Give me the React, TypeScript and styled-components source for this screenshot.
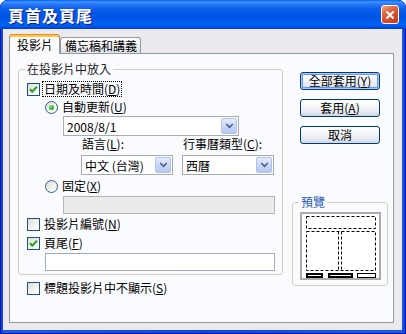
import styled, { createGlobalStyle } from "styled-components";

const FONT = `"Noto Sans CJK TC", "Noto Sans CJK SC", "Liberation Sans", sans-serif`;

const GlobalStyle = createGlobalStyle`
  html, body {
    margin: 0;
    padding: 0;
    background: #ffffff;
  }
  * {
    box-sizing: border-box;
  }
`;

const Window = styled.div`
  width: 406px;
  height: 334px;
  display: flex;
  flex-direction: column;
  background: linear-gradient(90deg, #0831D9 0%, #1C5BE8 1%, #0A47DC 50%, #1C5BE8 99%, #0831D9 100%);
  border-radius: 8px 8px 0 0;
  box-shadow: inset 0 0 0 1px #0019A8;
  overflow: hidden;
  font-family: ${FONT};
  font-size: 12px;
  color: #000;
`;

const TitleBar = styled.div`
  height: 29px;
  flex: none;
  display: flex;
  align-items: center;
  justify-content: space-between;
  padding: 0 7px 0 8px;
  background: linear-gradient(
    180deg,
    #0A5FF5 0%,
    #3D95FF 7%,
    #2A78F6 14%,
    #0A5CEB 32%,
    #0054E3 60%,
    #0062F5 86%,
    #0052E6 93%,
    #0040C8 100%
  );
  border-radius: 8px 8px 0 0;
`;

const Title = styled.span`
  color: #ffffff;
  font-weight: bold;
  font-size: 16px;
  letter-spacing: 1px;
  text-shadow: 1px 1px 0 #0F1E8A;
`;

const CloseButton = styled.div`
  width: 18px;
  height: 19px;
  border: 1px solid #ffffff;
  border-radius: 3px;
  background: linear-gradient(150deg, #F2A68A 0%, #E46A45 30%, #D8492A 65%, #C53A18 100%);
  display: flex;
  align-items: center;
  justify-content: center;
`;

const Body = styled.div`
  flex: 1;
  margin: 0 4px 4px 3px;
  background: #ECEAEE;
  padding: 5px 8px 7px 6px;
  display: flex;
  flex-direction: column;
`;

const TabRow = styled.div`
  height: 20px;
  flex: none;
  display: flex;
  align-items: flex-end;
  margin-bottom: -1px;
  position: relative;
  z-index: 1;
`;

const Tab = styled.div<{ $active?: boolean; $w: number }>`
  width: ${(p) => p.$w}px;
  height: ${(p) => (p.$active ? 20 : 16)}px;
  margin-bottom: ${(p) => (p.$active ? 0 : 1)}px;
  display: flex;
  align-items: center;
  padding-left: ${(p) => (p.$active ? 7 : 4)}px;
  border: 1px solid #919B9C;
  border-bottom: none;
  border-radius: 3px 3px 0 0;
  line-height: 14px;
  white-space: nowrap;
  background: ${(p) =>
    p.$active ? "#FCFCFE" : "linear-gradient(180deg, #FFFFFF 0%, #F3F3F6 50%, #DEE2EB 100%)"};
  ${(p) =>
    p.$active
      ? `border-top: 1px solid #E68B2C; box-shadow: inset 0 2px 0 #FFC73C;`
      : ""}
`;

const Panel = styled.div`
  flex: 1;
  border: 1px solid #919B9C;
  background: #FAFBFE;
  display: flex;
  padding: 8px 5px 0 8px;
`;

const LeftColumn = styled.div`
  width: 265px;
  display: flex;
  flex-direction: column;
`;

const RightColumn = styled.div`
  width: 96px;
  margin-left: 9px;
  display: flex;
  flex-direction: column;
  align-items: center;
  padding-top: 10px;
`;

const GroupBox = styled.fieldset<{ $w?: number; $mt?: number }>`
  margin: ${(p) => p.$mt ?? 0}px 0 0 0;
  padding: 0;
  width: ${(p) => (p.$w ? `${p.$w}px` : "auto")};
  border: 1px solid #D0D0BF;
  border-radius: 3px;
  min-width: 0;
`;

const Legend = styled.legend<{ $color?: string }>`
  margin-left: 6px;
  padding: 0 2px;
  line-height: 14px;
  font-size: 12px;
  color: ${(p) => p.$color ?? "#222222"};
`;

const GroupContent = styled.div`
  display: flex;
  flex-direction: column;
  padding: 5px 6px 3px 8px;
`;

const Row = styled.div<{ $mt?: number; $indent?: number; $h?: number }>`
  display: flex;
  align-items: center;
  height: ${(p) => p.$h ?? 16}px;
  margin-top: ${(p) => p.$mt ?? 0}px;
  padding-left: ${(p) => p.$indent ?? 0}px;
  gap: ${(p) => (p.$indent === 54 ? 9 : 0)}px;
`;

const CheckBox = styled.span`
  width: 13px;
  height: 13px;
  flex: none;
  border: 1px solid #1C5180;
  background: linear-gradient(135deg, #DCDCD7 0%, #F4F4F0 60%, #FFFFFF 100%);
  display: flex;
  align-items: center;
  justify-content: center;
`;

const RadioButton = styled.span`
  width: 13px;
  height: 13px;
  flex: none;
  border: 1px solid #2F5E8C;
  border-radius: 50%;
  background: linear-gradient(135deg, #DCDCD7 0%, #F4F4F0 60%, #FFFFFF 100%);
  display: flex;
  align-items: center;
  justify-content: center;
`;

const RadioDot = styled.span`
  width: 5px;
  height: 5px;
  border-radius: 50%;
  background: radial-gradient(circle at 35% 35%, #8CE28C 0%, #2FB02F 55%, #188A18 100%);
`;

const Label = styled.span<{ $focus?: boolean }>`
  margin-left: 3px;
  line-height: 14px;
  white-space: nowrap;
  padding: 0 1px;
  outline: ${(p) => (p.$focus ? "1px dotted #000000" : "none")};
`;

const Combo = styled.div<{ $w: number }>`
  width: ${(p) => p.$w}px;
  height: 20px;
  border: 1px solid #A5ACB5;
  background: #ffffff;
  display: flex;
  align-items: center;
  justify-content: space-between;
  padding: 0 1px 0 3px;
  white-space: nowrap;
`;

const DropButton = styled.span`
  width: 16px;
  height: 16px;
  flex: none;
  border: 1px solid #B4C3E0;
  border-radius: 2px;
  background: linear-gradient(180deg, #E3EBFD 0%, #C7D6F9 55%, #B6C8F3 100%);
  display: flex;
  align-items: center;
  justify-content: center;
`;

const TextBox = styled.div<{ $w: number; $disabled?: boolean }>`
  width: ${(p) => p.$w}px;
  height: 18px;
  border: 1px solid ${(p) => (p.$disabled ? "#B4B4B4" : "#A5ACB5")};
  background: ${(p) => (p.$disabled ? "#EBEBEB" : "#ffffff")};
`;

const ButtonStack = styled.div`
  display: flex;
  flex-direction: column;
  gap: 9px;
`;

const Button = styled.button<{ $default?: boolean }>`
  width: 80px;
  height: 18px;
  padding: 0;
  font-family: ${FONT};
  font-size: 12px;
  line-height: 14px;
  color: #000;
  border: 1px solid #003C74;
  border-radius: 3px;
  background: linear-gradient(180deg, #FFFFFF 0%, #F4F5F8 45%, #E2E7F0 80%, #CDD5E4 100%);
  box-shadow: ${(p) =>
    p.$default ? "inset 0 0 0 1px #A9C6F6, inset 0 0 0 2px #6A98E8" : "none"};
`;

const PreviewFrame = styled.div`
  width: 81px;
  height: 68px;
  margin: 3px 0 5px 7px;
  border: 2px solid #ABABAB;
  background: #ffffff;
  display: flex;
`;

function Check() {
  return (
    <svg width="9" height="9" viewBox="0 0 9 9">
      <polyline points="1,4.2 3.3,6.6 8,1.8" fill="none" stroke="#21A121" strokeWidth="2" />
    </svg>
  );
}

function Chevron() {
  return (
    <svg width="9" height="6" viewBox="0 0 9 6">
      <polyline points="1.2,1 4.5,4.3 7.8,1" fill="none" stroke="#4D6185" strokeWidth="1.7" />
    </svg>
  );
}

function Key({ k }: { k: string }) {
  return (
    <>
      (<u>{k}</u>)
    </>
  );
}

function PreviewDrawing() {
  const dash = { fill: "none", stroke: "#000", strokeWidth: 1, strokeDasharray: "3 2" };
  return (
    <svg width="77" height="64" viewBox="0 0 77 64">
      <rect x="4.5" y="2.5" width="69" height="12" {...dash} />
      <rect x="4.5" y="17.5" width="69" height="39" {...dash} />
      <line x1="36.5" y1="17.5" x2="36.5" y2="56.5" {...dash} />
      <line x1="39.5" y1="17.5" x2="39.5" y2="56.5" {...dash} />
      <rect x="5" y="60" width="15" height="3" fill="#fff" stroke="#000" strokeWidth="2" />
      <rect x="27" y="60" width="23" height="3" fill="#fff" stroke="#000" strokeWidth="2" />
      <rect x="55.5" y="59.5" width="18" height="4" fill="#fff" stroke="#000" strokeWidth="1" />
    </svg>
  );
}

export default function App() {
  return (
    <>
      <GlobalStyle />
      <Window>
        <TitleBar>
          <Title>頁首及頁尾</Title>
          <CloseButton>
            <svg width="10" height="10" viewBox="0 0 10 10">
              <path d="M1.5 1.5 L8.5 8.5 M8.5 1.5 L1.5 8.5" stroke="#fff" strokeWidth="2" />
            </svg>
          </CloseButton>
        </TitleBar>
        <Body>
          <TabRow>
            <Tab $active $w={51}>投影片</Tab>
            <Tab $w={81}>備忘稿和講義</Tab>
          </TabRow>
          <Panel>
            <LeftColumn>
              <GroupBox>
                <Legend>在投影片中放入</Legend>
                <GroupContent>
                  <Row>
                    <CheckBox>
                      <Check />
                    </CheckBox>
                    <Label $focus>
                      日期及時間<Key k="D" />
                    </Label>
                  </Row>
                  <Row $mt={2} $indent={18}>
                    <RadioButton>
                      <RadioDot />
                    </RadioButton>
                    <Label>
                      自動更新<Key k="U" />
                    </Label>
                  </Row>
                  <Row $mt={1} $indent={36} $h={20}>
                    <Combo $w={176}>
                      <span>2008/8/1</span>
                      <DropButton>
                        <Chevron />
                      </DropButton>
                    </Combo>
                  </Row>
                  <Row $indent={54}>
                    <Label style={{ marginLeft: 0, width: 92 }}>
                      語言<Key k="L" />:
                    </Label>
                    <Label style={{ marginLeft: 0 }}>
                      行事曆類型<Key k="C" />:
                    </Label>
                  </Row>
                  <Row $mt={3} $indent={54} $h={20}>
                    <Combo $w={92}>
                      <span>中文 (台灣)</span>
                      <DropButton>
                        <Chevron />
                      </DropButton>
                    </Combo>
                    <Combo $w={92}>
                      <span>西曆</span>
                      <DropButton>
                        <Chevron />
                      </DropButton>
                    </Combo>
                  </Row>
                  <Row $mt={3} $indent={18}>
                    <RadioButton />
                    <Label>
                      固定<Key k="X" />
                    </Label>
                  </Row>
                  <Row $mt={2} $indent={36} $h={18}>
                    <TextBox $w={212} $disabled />
                  </Row>
                  <Row $mt={2}>
                    <CheckBox />
                    <Label>
                      投影片編號<Key k="N" />
                    </Label>
                  </Row>
                  <Row $mt={3}>
                    <CheckBox>
                      <Check />
                    </CheckBox>
                    <Label>
                      頁尾<Key k="F" />
                    </Label>
                  </Row>
                  <Row $mt={2} $indent={18} $h={18}>
                    <TextBox $w={230} />
                  </Row>
                </GroupContent>
              </GroupBox>
              <Row $mt={5} $indent={9}>
                <CheckBox />
                <Label>
                  標題投影片中不顯示<Key k="S" />
                </Label>
              </Row>
            </LeftColumn>
            <RightColumn>
              <ButtonStack>
                <Button $default>
                  全部套用<Key k="Y" />
                </Button>
                <Button>
                  套用<Key k="A" />
                </Button>
                <Button>取消</Button>
              </ButtonStack>
              <GroupBox $w={96} $mt={51}>
                <Legend $color="#2F5BB7">預覽</Legend>
                <PreviewFrame>
                  <PreviewDrawing />
                </PreviewFrame>
              </GroupBox>
            </RightColumn>
          </Panel>
        </Body>
      </Window>
    </>
  );
}
